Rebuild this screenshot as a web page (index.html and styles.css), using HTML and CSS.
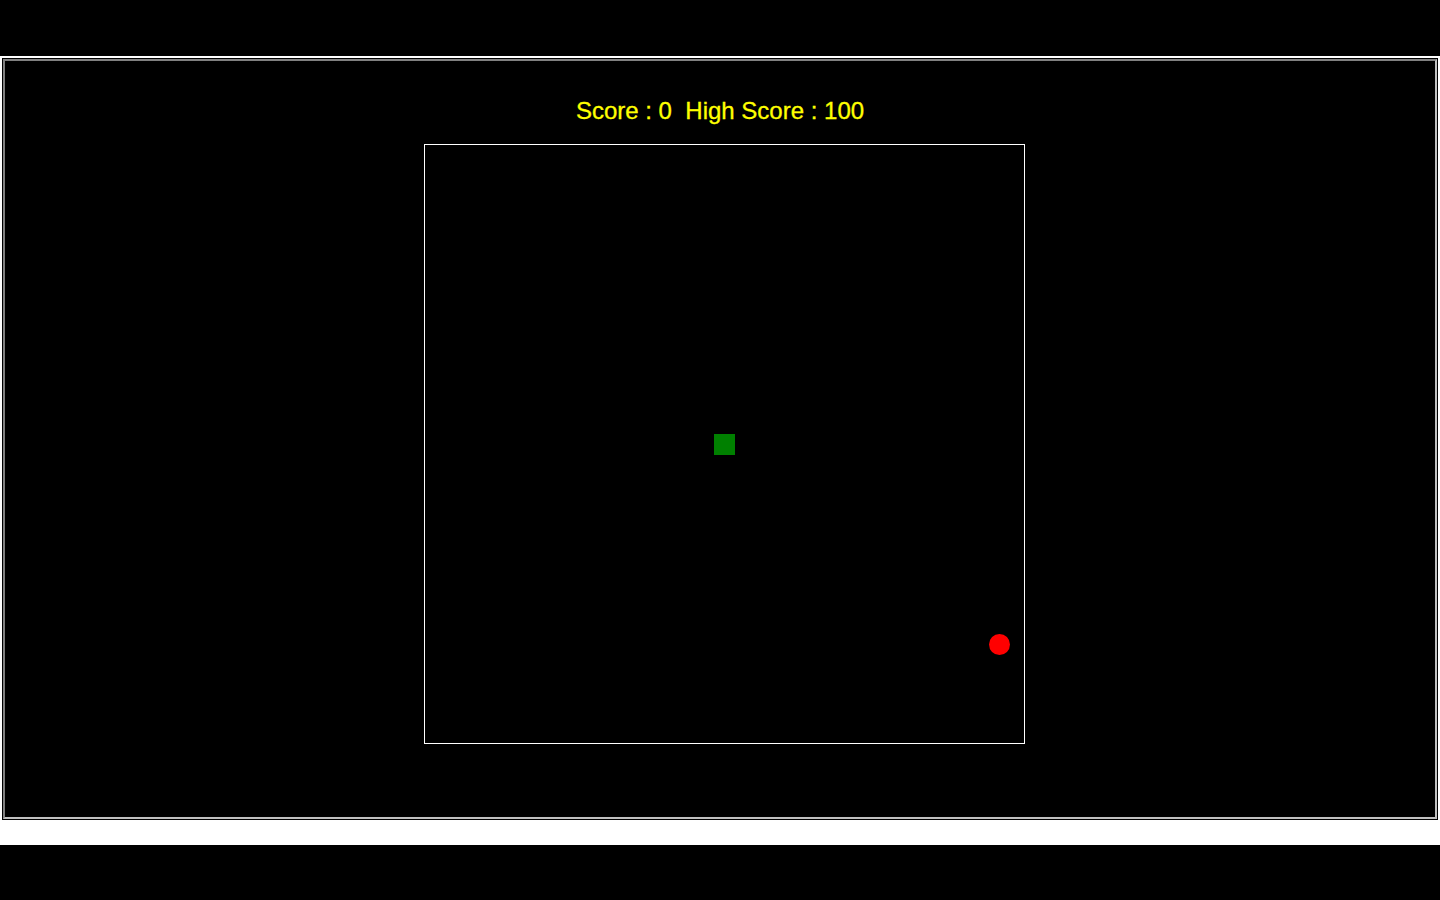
FILE: index.html
```html
<!DOCTYPE html>
<html lang="en">
<head>
<meta charset="utf-8">
<title>Snake</title>
<link rel="stylesheet" href="styles.css">
</head>
<body>
<div class="topbar"></div>
<div class="frame">
  <div class="panel">
    <div class="score">Score : 0&nbsp; High Score : 100</div>
    <div class="board">
      <div class="snake"></div>
      <div class="food"></div>
    </div>
  </div>
</div>
<div class="strip"></div>
<div class="bottombar"></div>
</body>
</html>
```

FILE: styles.css
```css
html, body {
  margin: 0;
  padding: 0;
  background: #000;
}
body {
  font-family: "Liberation Sans", Arial, sans-serif;
  width: 1440px;
  height: 900px;
  overflow: hidden;
}
.topbar {
  height: 56px;
  background: #000;
}
.frame {
  border: 2px solid #fff;
  padding: 1px;
  background: #000;
}
.panel {
  border-style: solid;
  border-width: 2px;
  border-color: #808080 #c0c0c0 #c0c0c0 #808080;
  background: #000;
  display: flex;
  flex-direction: column;
  align-items: center;
  padding: 36px 0 73px;
}
.score {
  color: #ffff00;
  font-size: 24px;
  line-height: 28px;
  height: 28px;
  white-space: pre;
  -webkit-text-stroke: 0.3px #ffff00;
}
.board {
  position: relative;
  box-sizing: border-box;
  width: 601px;
  height: 600px;
  margin-top: 19px;
  margin-left: 8px;
  border: 1px solid #fff;
  background: #000;
}
.snake {
  position: absolute;
  left: 289px;
  top: 289px;
  width: 21px;
  height: 21px;
  background: #008000;
}
.food {
  position: absolute;
  left: 564px;
  top: 489px;
  width: 21px;
  height: 21px;
  border-radius: 50%;
  background: #ff0000;
}
.strip {
  height: 23px;
  background: #fff;
}
.bottombar {
  height: 55px;
  background: #000;
}
```
